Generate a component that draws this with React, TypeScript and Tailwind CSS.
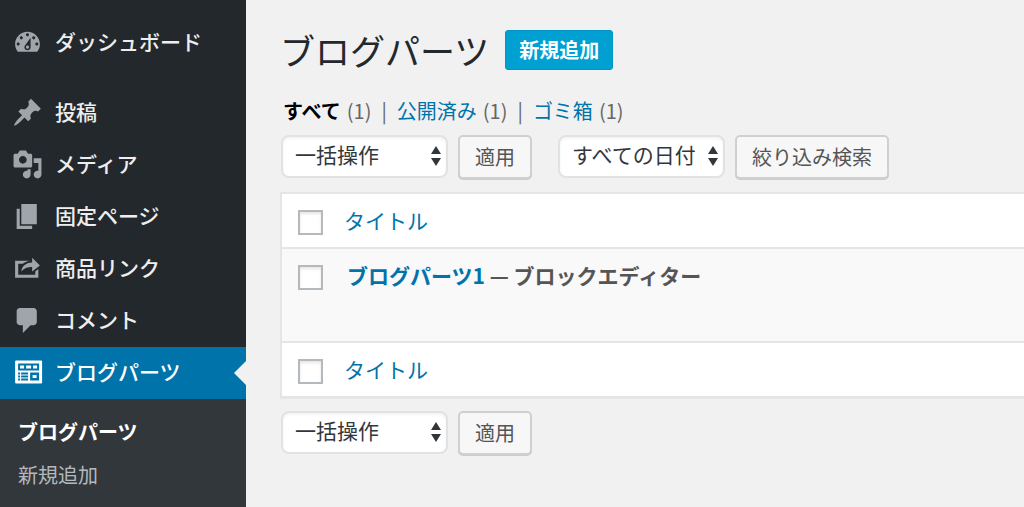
import React from 'react';

const DashboardIcon = () => (
  <path d="M3.76 16h12.48c1.1-1.37 1.76-3.11 1.76-5 0-4.42-3.58-8-8-8s-8 3.58-8 8c0 1.89.66 3.63 1.76 5zM10 4c.55 0 1 .45 1 1s-.45 1-1 1-1-.45-1-1 .45-1 1-1zM6 6c.55 0 1 .45 1 1s-.45 1-1 1-1-.45-1-1 .45-1 1-1zm8 0c.55 0 1 .45 1 1s-.45 1-1 1-1-.45-1-1 .45-1 1-1zm-5.37 5.55L12 7v6c0 1.1-.9 2-2 2s-2-.9-2-2c0-.57.24-1.08.63-1.45zM4 10c.55 0 1 .45 1 1s-.45 1-1 1-1-.45-1-1 .45-1 1-1zm12 0c.55 0 1 .45 1 1s-.45 1-1 1-1-.45-1-1 .45-1 1-1zm-5 3c0-.55-.45-1-1-1s-1 .45-1 1 .45 1 1 1 1-.45 1-1z" />
);

const PinIcon = () => (
  <path d="M10.44 3.02l1.82-1.82 6.36 6.35-1.83 1.82c-1.05-.68-2.48-.57-3.41.36l-.75.75c-.92.93-1.04 2.35-.35 3.41l-1.83 1.82-2.41-2.41-2.8 2.79c-.42.42-3.38 2.71-3.8 2.29s1.86-3.39 2.28-3.81l2.79-2.79L4.1 9.36l1.83-1.82c1.05.69 2.48.57 3.4-.36l.75-.75c.93-.92 1.05-2.35.36-3.41z" />
);

const MediaIcon = () => (
  <path d="M13 11V4c0-.55-.45-1-1-1h-1.67L9 1H5L3.67 3H2c-.55 0-1 .45-1 1v7c0 .55.45 1 1 1h10c.55 0 1-.45 1-1zM7 4.5c1.38 0 2.5 1.12 2.5 2.5S8.38 9.5 7 9.5 4.5 8.38 4.5 7 5.62 4.5 7 4.5zM14 6h5v10.5c0 1.38-1.12 2.5-2.5 2.5S14 17.88 14 16.5s1.12-2.5 2.5-2.5c.17 0 .34.02.5.05V9h-3V6zm-4 8.05V13h2v3.5c0 1.38-1.12 2.5-2.5 2.5S7 17.88 7 16.5 8.12 14 9.5 14c.17 0 .34.02.5.05z" />
);

const PageIcon = () => <path d="M6 15V2h10v13H6zm-1 1h8v2H3V5h2v11z" />;

const ShareIcon = () => (
  <path d="M18 8l-5 4V9.01c-2.58.06-4.88.45-7 2.99.29-3.57 2.66-5.66 7-5.94V3zM4 14h11v-2l2-1.6V16H2V5h9.43c-1.83.32-3.31 1-4.41 2H4v7z" />
);

const CommentIcon = () => (
  <path d="M5 2h9c1.1 0 2 .9 2 2v7c0 1.1-.9 2-2 2h-2l-5 5v-5H5c-1.1 0-2-.9-2-2V4c0-1.1.9-2 2-2z" />
);

const PartsIcon = () => (
  <path
    transform="translate(2 2.3) scale(.645)"
    fillRule="evenodd"
    d="M1 0h25a1 1 0 0 1 1 1v21a1 1 0 0 1-1 1H1a1 1 0 0 1-1-1V1a1 1 0 0 1 1-1zM3 3v7h21V3zM5 5h4v3H5zM11 5h5v3h-5zM18 5h4v3h-4zM3 12v2h2v-2zM6 12v2h7v-2zM3 15v2h2v-2zM6 15v2h7v-2zM3 18v2h2v-2zM6 18v2h7v-2zM15 12v8h9v-8zM17.500 14.500h4v3h-4z"
  />
);

const menu = [
  { label: '投稿', icon: <PinIcon /> },
  { label: 'メディア', icon: <MediaIcon /> },
  { label: '固定ページ', icon: <PageIcon /> },
  { label: '商品リンク', icon: <ShareIcon /> },
  { label: 'コメント', icon: <CommentIcon /> },
  { label: 'ブログパーツ', icon: <PartsIcon />, current: true },
];

type MenuItemProps = {
  label: string;
  icon: React.ReactNode;
  current?: boolean;
};

const MenuItem = ({ label, icon, current }: MenuItemProps) => (
  <li>
    <a
      href="#"
      aria-current={current ? 'page' : undefined}
      className={`relative flex h-[52px] items-center gap-3 pb-0.5 pl-3 text-[21px] font-medium ${
        current ? 'bg-[#0073aa] text-white' : 'text-[#eeeeee]'
      }`}
    >
      <svg
        viewBox="0 0 20 20"
        aria-hidden="true"
        className={`size-[31px] ${current ? 'fill-white' : 'fill-[#a0a5aa]'}`}
      >
        {icon}
      </svg>
      {label}
      {current && (
        <span className="absolute top-1/2 right-0 size-0 -translate-y-1/2 border-y-12 border-r-12 border-y-transparent border-r-[#f1f1f1]" />
      )}
    </a>
  </li>
);

type SelectProps = {
  label: string;
  option: string;
};

const Select = ({ label, option }: SelectProps) => (
  <div className="relative">
    <select
      aria-label={label}
      className="block h-[43px] w-[167px] appearance-none rounded-lg border-2 border-[#e2e2e2] bg-white pb-1 pl-3 text-[21px] text-[#32373c] shadow-[inset_0_2px_3px_rgba(0,0,0,0.05)]"
    >
      <option>{option}</option>
    </select>
    <svg
      viewBox="0 0 10 20"
      aria-hidden="true"
      className="pointer-events-none absolute top-[11px] right-[7px] h-5 w-[10px] fill-[#32373c]"
    >
      <path d="M5 0l5 8H0zM5 20l5-8H0z" />
    </svg>
  </div>
);

const Button = ({ children }: { children: React.ReactNode }) => (
  <button
    type="button"
    className="h-11 rounded-[5px] border-2 border-[#d0d0d0] bg-[#f7f7f7] px-[15px] text-xl text-[#555555] shadow-[0_1px_0_#cccccc]"
  >
    {children}
  </button>
);

const Checkbox = ({ label }: { label: string }) => (
  <input
    type="checkbox"
    aria-label={label}
    className="block size-[25px] appearance-none border-2 border-[#b4b9be] bg-white shadow-[inset_0_2px_3px_rgba(0,0,0,0.1)] checked:bg-[#0073aa]"
  />
);

const TitleRow = () => (
  <tr className="h-[55px] bg-white">
    <td className="w-[63px] pt-1 pl-4">
      <Checkbox label="すべて選択" />
    </td>
    <th scope="col" className="text-left font-normal">
      <a href="#" className="text-[#0073aa]">
        タイトル
      </a>
    </th>
  </tr>
);

export default function App() {
  return (
    <div className="flex min-h-screen bg-[#f1f1f1] font-['Noto_Sans_CJK_JP',sans-serif]">
      <nav className="w-[246px] shrink-0 bg-[#23282d] pt-[17px]">
        <ul>
          <MenuItem label="ダッシュボード" icon={<DashboardIcon />} />
        </ul>
        <ul className="pt-[18px]">
          {menu.map((item) => (
            <MenuItem key={item.label} {...item} />
          ))}
        </ul>
        <ul className="bg-[#32373c] py-[11px] pl-[18px] text-xl leading-[43px]">
          <li>
            <a href="#" className="font-bold text-white">
              ブログパーツ
            </a>
          </li>
          <li>
            <a href="#" className="text-[#b4b9be]">
              新規追加
            </a>
          </li>
        </ul>
      </nav>

      <main className="min-w-0 flex-1 overflow-hidden pt-6 pl-[34px]">
        <div className="flex items-center gap-4">
          <h1 className="text-[35px] leading-[52px] text-[#23282d]">ブログパーツ</h1>
          <a
            href="#"
            className="rounded-[3px] border border-[#0096c6] bg-[#00a0d2] px-[13px] text-xl leading-[38px] font-bold text-white"
          >
            新規追加
          </a>
        </div>

        <ul className="flex gap-[10px] pt-5 pl-[3px] text-xl leading-[30px] text-[#666666]">
          <li className="flex gap-1.5">
            <a href="#" className="font-bold text-black">
              すべて
            </a>
            (1)
          </li>
          <li>|</li>
          <li className="flex gap-1.5">
            <a href="#" className="text-[#0073aa]">
              公開済み
            </a>
            (1)
          </li>
          <li>|</li>
          <li className="flex gap-1.5">
            <a href="#" className="text-[#0073aa]">
              ゴミ箱
            </a>
            (1)
          </li>
        </ul>

        <div className="flex items-start gap-[10px] pt-[9px] pl-px">
          <Select label="一括操作を選択" option="一括操作" />
          <Button>適用</Button>
          <div className="flex items-start gap-[10px] pl-4">
            <Select label="日付で絞り込む" option="すべての日付" />
            <Button>絞り込み検索</Button>
          </div>
        </div>

        <table className="mt-[13px] w-full border-collapse border-y-2 border-l-2 border-[#e5e5e5] text-[21px] shadow-[0_1px_1px_rgba(0,0,0,0.04)]">
          <thead>
            <TitleRow />
          </thead>
          <tbody>
            <tr className="h-[94px] border-y-2 border-[#e5e5e5] bg-[#f9f9f9] align-top">
              <td className="pt-4 pl-4">
                <Checkbox label="ブログパーツ1を選択" />
              </td>
              <td className="pt-[11px] pl-[3px] leading-[31px] font-bold text-[#555555]">
                <a href="#" className="text-[#0073aa]">
                  ブログパーツ1
                </a>{' '}
                — ブロックエディター
              </td>
            </tr>
          </tbody>
          <tfoot>
            <TitleRow />
          </tfoot>
        </table>

        <div className="flex items-start gap-[10px] pt-[13px] pl-px">
          <Select label="一括操作を選択" option="一括操作" />
          <Button>適用</Button>
        </div>
      </main>
    </div>
  );
}
